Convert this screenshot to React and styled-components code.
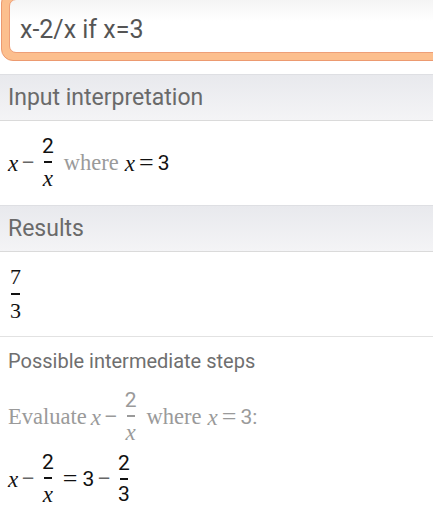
import React from "react";
import styled, { createGlobalStyle } from "styled-components";

const Global = createGlobalStyle`
  html, body { margin: 0; padding: 0; background: #ffffff; }
  body { font-family: Roboto, "Noto Sans", sans-serif; overflow: hidden; }
`;

const Page = styled.div`
  width: 433px;
  height: 525px;
  overflow: hidden;
  background: #fff;
`;

const SearchArea = styled.div`
  height: 74px;
  overflow: hidden;
  padding-left: 1px;
`;

const Ring = styled.div`
  margin-top: -9px;
  margin-right: -30px;
  padding: 7px;
  background: #fcbf8e;
  border: 1px solid #ec9a70;
  border-radius: 12px;
`;

const Field = styled.div`
  height: 54px;
  box-sizing: border-box;
  padding: 6px 0 0 10px;
  display: flex;
  align-items: center;
  background: linear-gradient(#f4f4f4, #ffffff 40%);
  border: 1px solid #ee9f78;
  border-radius: 7px;
  font-size: 25px;
  color: #555;
`;

const PodHeader = styled.div`
  height: 47px;
  box-sizing: border-box;
  display: flex;
  align-items: center;
  padding: 0 8px;
  background: linear-gradient(#e8e9ed, #f4f4f6);
  border-top: 1px solid #dedfe3;
  border-bottom: 1px solid #dadada;
  font-size: 23px;
  color: #6a6a6a;
`;

const PodBody = styled.div`
  height: ${(p) => p.$h}px;
  box-sizing: border-box;
  display: flex;
  align-items: center;
  padding: 0 8px;
  border-bottom: ${(p) => (p.$line ? "1px solid #e2e2e2" : "none")};
`;

const MathLine = styled.div`
  display: flex;
  align-items: center;
  color: ${(p) => (p.$muted ? "#9a9a9a" : "#111")};
`;

const Var = styled.span`
  font-family: "Liberation Serif", serif;
  font-style: italic;
  font-size: 23px;
  line-height: 1;
`;

const Num = styled.span`
  font-family: ${(p) => (p.$serif ? '"Liberation Serif", serif' : "Roboto, sans-serif")};
  font-size: ${(p) => (p.$serif ? 22 : 21)}px;
  line-height: 1;
`;

const Op = styled.span`
  font-family: Roboto, sans-serif;
  font-size: 21px;
  margin: 0 ${(p) => p.$m ?? 3}px;
  color: ${(p) => p.$c || "inherit"};
`;

const Eq = styled.span`
  font-family: "Liberation Serif", serif;
  font-size: 26px;
  line-height: 1;
  margin: 0 ${(p) => p.$m ?? 4}px;
`;

const Word = styled.span`
  font-family: "Liberation Serif", serif;
  font-size: 22.5px;
  color: #9a9a9a;
  margin: 0 ${(p) => p.$mr ?? 6}px 0 ${(p) => p.$ml ?? 6}px;
`;

const Frac = styled.span`
  display: inline-flex;
  flex-direction: column;
  align-items: center;
  padding: 0 ${(p) => p.$pad ?? 4}px;
  gap: ${(p) => p.$gap ?? 4}px;
`;

const Bar = styled.span`
  display: block;
  width: ${(p) => p.$w ?? 8}px;
  height: 1.5px;
  background: currentColor;
`;

const StepsTitle = styled.div`
  height: 48px;
  display: flex;
  align-items: center;
  padding: 0 8px;
  font-size: 20px;
  color: #6f6f6f;
`;

const StepRow = styled.div`
  height: ${(p) => p.$h}px;
  display: flex;
  align-items: center;
  padding: 0 8px;
`;

const Fraction = ({ n, d, w, gap, pad }) => (
  <Frac $gap={gap} $pad={pad}>
    {n}
    <Bar $w={w} />
    {d}
  </Frac>
);

export default function App() {
  return (
    <Page>
      <Global />
      <SearchArea>
        <Ring>
          <Field>x-2/x if x=3</Field>
        </Ring>
      </SearchArea>

      <PodHeader>Input interpretation</PodHeader>
      <PodBody $h={84}>
        <MathLine>
          <Var>x</Var>
          <Op $c="#666">–</Op>
          <Fraction n={<Num>2</Num>} d={<Var>x</Var>} />
          <Word>where</Word>
          <Var>x</Var>
          <Eq>=</Eq>
          <Num>3</Num>
        </MathLine>
      </PodBody>

      <PodHeader>Results</PodHeader>
      <PodBody $h={85} $line>
        <MathLine>
          <Fraction
            n={<Num $serif>7</Num>}
            d={<Num $serif>3</Num>}
            w={9}
            gap={5}
            pad={2}
          />
        </MathLine>
      </PodBody>

      <StepsTitle>Possible intermediate steps</StepsTitle>

      <StepRow $h={64}>
        <MathLine $muted>
          <Word $ml={0} $mr={4}>Evaluate</Word>
          <Var>x</Var>
          <Op>–</Op>
          <Fraction n={<Num>2</Num>} d={<Var>x</Var>} />
          <Word>where</Word>
          <Var>x</Var>
          <Eq>=</Eq>
          <Num>3:</Num>
        </MathLine>
      </StepRow>

      <StepRow $h={60}>
        <MathLine>
          <Var>x</Var>
          <Op $c="#666">–</Op>
          <Fraction n={<Num>2</Num>} d={<Var>x</Var>} />
          <Eq $m={5}>=</Eq>
          <Num>3</Num>
          <Op $c="#666">–</Op>
          <Fraction n={<Num>2</Num>} d={<Num>3</Num>} />
        </MathLine>
      </StepRow>
    </Page>
  );
}
